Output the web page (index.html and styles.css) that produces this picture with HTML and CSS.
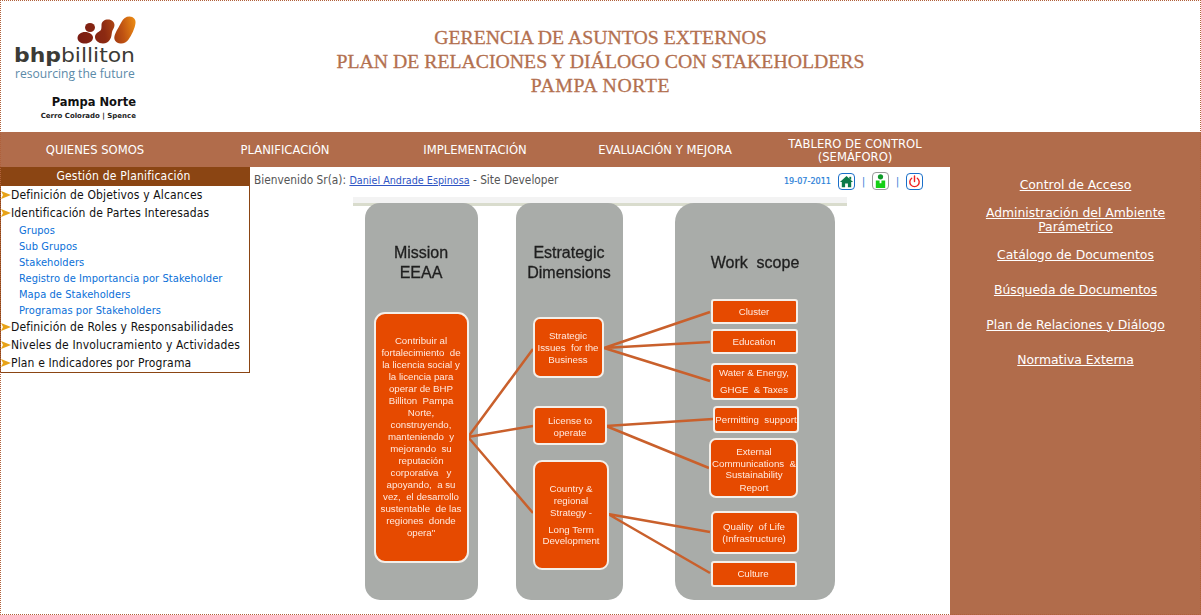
FILE: index.html
```html
<!DOCTYPE html>
<html lang="es">
<head>
<meta charset="utf-8">
<title>Gerencia de Asuntos Externos</title>
<link rel="stylesheet" href="styles.css">
</head>
<body>
<div class="page">
  <header class="top">
    <svg class="logo" width="140" height="125" viewBox="0 0 140 125" aria-label="BHP Billiton">
      <defs>
        <linearGradient id="lg" gradientUnits="userSpaceOnUse" x1="78" y1="36" x2="136" y2="24">
          <stop offset="0" stop-color="#7a1c12"/>
          <stop offset=".45" stop-color="#8c2a12"/>
          <stop offset=".75" stop-color="#bf5212"/>
          <stop offset="1" stop-color="#ec8c14"/>
        </linearGradient>
      </defs>
      <ellipse fill="url(#lg)" cx="90" cy="27.500" rx="5" ry="4.500"/>
      <path fill="url(#lg)" d="M77.500 38C77.500 34.500 81 32 85 32C89.500 32 93 34.500 93 37.500C93 41 89.500 43.500 85 43.500C81 43.500 77.500 41.500 77.500 38Z"/>
      <path fill="url(#lg)" d="M101.500 25C101.500 21.500 104.500 19.500 108 19.500C112 19.500 114.500 22 114.500 25C114.500 28 112.500 29.500 112 32C111.500 35 111.500 37 110 39.500C108.500 42 106 43.500 103 43.500C98.500 43.500 95 40.500 95 37C95 33.500 98.500 32 100.500 30.500C101.500 29.500 101.500 27 101.500 25Z"/>
      <path fill="url(#lg)" d="M121.500 22C123 18.500 126 16.500 129.500 16.500C133.500 16.500 136 19.500 135.500 23C135 28 131.500 35.500 128.500 39.500C126.500 42.500 123.500 43.800 120.500 43.500C116 43 113.500 40 114.500 36C115.500 32 119.500 26 121.500 22Z"/>
      <text class="logo-name" x="14" y="62" textLength="121" lengthAdjust="spacingAndGlyphs"><tspan class="logo-bhp">bhp</tspan>billiton</text>
      <text class="logo-tag" x="15" y="78">resourcing the future</text>
      <text class="logo-site" x="136" y="106" text-anchor="end">Pampa Norte</text>
      <text class="logo-mines" x="136" y="118" text-anchor="end">Cerro Colorado | Spence</text>
    </svg>
    <h1 class="title">GERENCIA DE ASUNTOS EXTERNOS<br>PLAN DE RELACIONES Y DIÁLOGO CON STAKEHOLDERS<br><span class="title-site">PAMPA NORTE</span></h1>
    <div class="top-spacer"></div>
  </header>

  <div class="body-grid">
    <div class="center">
      <nav class="nav">
        <a href="#">QUIENES SOMOS</a>
        <a href="#">PLANIFICACIÓN</a>
        <a href="#">IMPLEMENTACIÓN</a>
        <a href="#">EVALUACIÓN Y MEJORA</a>
        <a href="#">TABLERO DE CONTROL<br>(SEMÁFORO)</a>
      </nav>
      <div class="content">
        <aside class="menu">
          <div class="menu-title">Gestión de Planificación</div>
          <a class="mi" href="#"><svg class="arrow" width="10" height="8" viewBox="0 0 10 8"><path d="M0 0L10 4L0 8L2 4Z"/></svg>Definición de Objetivos y Alcances</a>
          <a class="mi" href="#"><svg class="arrow" width="10" height="8" viewBox="0 0 10 8"><path d="M0 0L10 4L0 8L2 4Z"/></svg>Identificación de Partes Interesadas</a>
          <a class="si" href="#">Grupos</a>
          <a class="si" href="#">Sub Grupos</a>
          <a class="si" href="#">Stakeholders</a>
          <a class="si" href="#">Registro de Importancia por Stakeholder</a>
          <a class="si" href="#">Mapa de Stakeholders</a>
          <a class="si" href="#">Programas por Stakeholders</a>
          <a class="mi" href="#"><svg class="arrow" width="10" height="8" viewBox="0 0 10 8"><path d="M0 0L10 4L0 8L2 4Z"/></svg>Definición de Roles y Responsabilidades</a>
          <a class="mi" href="#"><svg class="arrow" width="10" height="8" viewBox="0 0 10 8"><path d="M0 0L10 4L0 8L2 4Z"/></svg>Niveles de Involucramiento y Actividades</a>
          <a class="mi" href="#"><svg class="arrow" width="10" height="8" viewBox="0 0 10 8"><path d="M0 0L10 4L0 8L2 4Z"/></svg>Plan e Indicadores por Programa</a>
        </aside>
        <main class="main">
          <div class="welcome">
            <div class="who">Bienvenido Sr(a): <a href="#">Daniel Andrade Espinosa</a> - Site Developer</div>
            <div class="tools">
              <span class="date">19-07-2011</span>
              <a class="tool blue" href="#"><svg width="15" height="15" viewBox="0 0 16 16"><path fill="#0c7a4a" d="M8 2L15 8.500H13V14H9.500V10H6.500V14H3V8.500H1Z"/><rect fill="#0c7a4a" x="11" y="3" width="2" height="3"/></svg></a>
              <span class="sep">|</span>
              <a class="tool gray" href="#"><svg width="15" height="15" viewBox="0 0 16 16"><circle fill="#0e9a2a" cx="8" cy="4" r="2.800"/><path fill="#14d014" d="M3 8H7V11H9V8H13V16H3Z"/></svg></a>
              <span class="sep">|</span>
              <a class="tool blue" href="#"><svg width="15" height="15" viewBox="0 0 16 16"><path fill="none" stroke="#f02020" stroke-width="1.500" stroke-linecap="round" d="M5 4.500A5 5 0 1 0 11 4.500M8 2V8"/></svg></a>
            </div>
          </div>
          <svg class="diagram" width="495" height="408" viewBox="352 197 495 408" role="img">
            <rect class="band" x="353" y="197" width="494" height="6"/>
            <rect class="rule" x="353" y="203" width="494" height="3"/>
            <rect class="col" x="365" y="203" width="113" height="397" rx="15"/>
            <rect class="col" x="516" y="203" width="107" height="397" rx="15"/>
            <rect class="col" x="675" y="203" width="160" height="397" rx="19"/>

            <text class="head" x="421" y="258">Mission</text>
            <text class="head" x="421" y="278">EEAA</text>
            <text class="head" x="569" y="258">Estrategic</text>
            <text class="head" x="569" y="278">Dimensions</text>
            <text class="head" x="755" y="268">Work  scope</text>

            <path class="link" d="M468 437L533 349M468 437L533 426M468 437L533 513M604 348L710 312M604 348L710 342M604 348L710 381M606 426L713 419M606 426L709 468M608 514L710 532M608 514L710 573"/>

            <rect class="box" x="375" y="313" width="93" height="249" rx="10"/>
            <rect class="box" x="534" y="318" width="69" height="59" rx="6"/>
            <rect class="box" x="534" y="407" width="72" height="37" rx="4"/>
            <rect class="box" x="534" y="461" width="74" height="108" rx="8"/>
            <rect class="box" x="712" y="300" width="85" height="23" rx="2"/>
            <rect class="box" x="712" y="330" width="85" height="23" rx="2"/>
            <rect class="box" x="712" y="364" width="85" height="35" rx="3"/>
            <rect class="box" x="714" y="407" width="84" height="25" rx="3"/>
            <rect class="box" x="710" y="439" width="87" height="58" rx="6"/>
            <rect class="box" x="712" y="512" width="86" height="41" rx="4"/>
            <rect class="box" x="712" y="562" width="84" height="24" rx="2"/>

            <text class="lbl" x="421" y="344">Contribuir al</text>
            <text class="lbl" x="421" y="356">fortalecimiento  de</text>
            <text class="lbl" x="421" y="368">la licencia social y</text>
            <text class="lbl" x="421" y="380">la licencia para</text>
            <text class="lbl" x="421" y="392">operar de BHP</text>
            <text class="lbl" x="421" y="404">Billiton  Pampa</text>
            <text class="lbl" x="421" y="416">Norte,</text>
            <text class="lbl" x="421" y="428">construyendo,</text>
            <text class="lbl" x="421" y="440">manteniendo  y</text>
            <text class="lbl" x="421" y="452">mejorando  su</text>
            <text class="lbl" x="421" y="464">reputación</text>
            <text class="lbl" x="421" y="476">corporativa   y</text>
            <text class="lbl" x="421" y="488">apoyando,  a su</text>
            <text class="lbl" x="421" y="500">vez,  el desarrollo</text>
            <text class="lbl" x="421" y="512">sustentable  de las</text>
            <text class="lbl" x="421" y="524">regiones  donde</text>
            <text class="lbl" x="421" y="536">opera"</text>

            <text class="lbl" x="568" y="339">Strategic</text>
            <text class="lbl" x="568" y="351">Issues  for the</text>
            <text class="lbl" x="568" y="363">Business</text>
            <text class="lbl" x="570" y="424">License to</text>
            <text class="lbl" x="570" y="436">operate</text>
            <text class="lbl" x="571" y="492">Country &amp;</text>
            <text class="lbl" x="571" y="504">regional</text>
            <text class="lbl" x="571" y="516">Strategy -</text>
            <text class="lbl" x="571" y="533">Long Term</text>
            <text class="lbl" x="571" y="544">Development</text>

            <text class="lbl" x="754" y="315">Cluster</text>
            <text class="lbl" x="754" y="345">Education</text>
            <text class="lbl" x="754" y="376">Water &amp; Energy,</text>
            <text class="lbl" x="754" y="393">GHGE  &amp; Taxes</text>
            <text class="lbl" x="756" y="423">Permitting  support</text>
            <text class="lbl" x="754" y="455">External</text>
            <text class="lbl" x="754" y="467">Communications  &amp;</text>
            <text class="lbl" x="754" y="478">Sustainability</text>
            <text class="lbl" x="754" y="491">Report</text>
            <text class="lbl" x="754" y="530">Quality  of Life</text>
            <text class="lbl" x="754" y="542">(Infrastructure)</text>
            <text class="lbl" x="753" y="577">Culture</text>
          </svg>
        </main>
      </div>
    </div>
    <aside class="side">
      <a href="#">Control de Acceso</a>
      <a href="#">Administración del Ambiente Parámetrico</a>
      <a href="#">Catálogo de Documentos</a>
      <a href="#">Búsqueda de Documentos</a>
      <a href="#">Plan de Relaciones y Diálogo</a>
      <a href="#">Normativa Externa</a>
    </aside>
  </div>
</div>
</body>
</html>
```

FILE: styles.css
```css
* { box-sizing: border-box; }
html, body { margin: 0; padding: 0; background: #fff; }
body { font-family: "DejaVu Sans Condensed", "DejaVu Sans", sans-serif; overflow: hidden; }

.page {
  width: 1201px;
  height: 615px;
  position: relative;
  overflow: hidden;
  display: flex;
  flex-direction: column;
}
.page::after {
  content: "";
  position: absolute;
  inset: 0;
  border: 1px dotted #b0603a;
  pointer-events: none;
}

.top {
  height: 132px;
  display: grid;
  grid-template-columns: 200px 1fr 200px;
}
.logo { display: block; }
.logo-name { font: 400 19px "DejaVu Sans", sans-serif; fill: #3b3b36; }
.logo-bhp { font-weight: 700; }
.logo-tag { font: 400 12.1px "Open Sans", sans-serif; fill: #5b8aa8; }
.logo-site { font: 700 11.5px "DejaVu Sans", sans-serif; fill: #111; }
.logo-mines { font: 700 7px "DejaVu Sans", sans-serif; fill: #222; }

.title {
  margin: 25px 0 0;
  text-align: center;
  font: 400 19.75px/24px "Liberation Serif", serif;
  color: #b3704f;
  -webkit-text-stroke: 0.3px #b3704f;
}
.title-site { letter-spacing: 0.6px; }

.body-grid {
  flex: 1;
  display: grid;
  grid-template-columns: 950px 251px;
  min-height: 0;
}

.nav {
  height: 35px;
  padding-top: 2px;
  background: #b16c4b;
  display: grid;
  grid-template-columns: repeat(5, 190px);
  align-items: center;
  text-align: center;
}
.nav a {
  color: #fff;
  text-decoration: none;
  font-family: "DejaVu Sans", sans-serif;
  font-size: 11.6px;
  line-height: 13px;
}

.content { display: flex; align-items: flex-start; }

.menu {
  width: 250px;
  flex: none;
  border: 1px solid #8b4513;
  border-top: 0;
  background: #fff;
  display: flex;
  flex-direction: column;
}
.menu-title {
  height: 19px;
  margin: 0 -1px;
  padding-right: 3px;
  background: #8b4513;
  color: #fff;
  text-align: center;
  font-size: 12px;
  letter-spacing: 0.2px;
  line-height: 18px;
}
.mi {
  height: 18px;
  line-height: 17px;
  font-size: 12px;
  letter-spacing: 0.15px;
  color: #111;
  text-decoration: none;
  display: flex;
  align-items: center;
  white-space: nowrap;
}
.arrow { fill: #e8a317; flex: none; }
.si {
  height: 16px;
  line-height: 18px;
  padding-left: 18px;
  font-size: 11px;
  letter-spacing: 0.08px;
  color: #0a6fd8;
  text-decoration: none;
  white-space: nowrap;
}

.main { flex: 1; min-width: 0; }
.welcome {
  height: 30px;
  display: flex;
  justify-content: space-between;
  padding: 6px 27px 0 4px;
  font-size: 11.8px;
  color: #555;
}
.who { line-height: 14px; }
.who a { color: #2f55c4; font-size: 10.7px; }
.tools { display: flex; align-items: flex-start; }
.date {
  color: #2a80d8;
  font-size: 9px;
  line-height: 16px;
  margin-right: 7px;
  -webkit-text-stroke: 0.2px #2a80d8;
}
.tool {
  width: 17px;
  height: 17px;
  border: 1px solid #1a6fc9;
  border-radius: 4px;
  display: block;
  background: #fff;
}
.tool svg { display: block; }
.tool.gray { border-color: #9a9a9a; margin-top: -1px; height: 18px; }
.sep { width: 17px; text-align: center; color: #1477d4; font-size: 10px; line-height: 18px; }

.diagram { display: block; margin-left: 102px; filter: blur(0.5px); }
.band { fill: #f3f3f3; }
.rule { fill: #d9dccd; }
.col { fill: #a9aca9; }
.box { fill: #e64a00; stroke: #f4efe9; stroke-width: 2; }
.link { fill: none; stroke: #c9602c; stroke-width: 2.5; }
.head { font: 400 16px "Liberation Sans", sans-serif; fill: #1f1f1f; stroke: #1f1f1f; stroke-width: 0.3; text-anchor: middle; white-space: pre; }
.lbl { font: 400 9.7px "Liberation Sans", sans-serif; fill: #ffe9de; text-anchor: middle; white-space: pre; }

.side {
  background: #b16c4b;
  display: grid;
  grid-auto-rows: 35px;
  align-items: center;
  text-align: center;
  padding: 35px 12px 0;
}
.side a {
  color: #fff;
  font-family: "DejaVu Sans", sans-serif;
  font-size: 12.4px;
  line-height: 14px;
}
```
